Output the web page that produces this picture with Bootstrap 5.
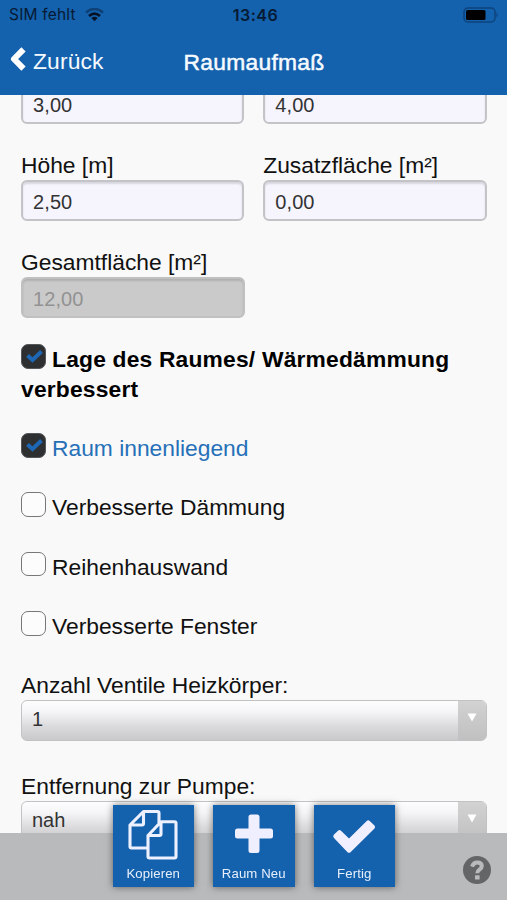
<!DOCTYPE html>
<html lang="de">
<head>
<meta charset="utf-8">
<meta name="viewport" content="width=device-width, initial-scale=1">
<title>Raumaufmaß</title>
<link href="https://cdn.jsdelivr.net/npm/bootstrap@5.3.0/dist/css/bootstrap.min.css" rel="stylesheet">
<style>
  body { font-family: "Liberation Sans", Arial, sans-serif; background: #f9f9f9; color: #111; }
  .screen { height: 900px; }
  .topbar { background: #1461ad; height: 95px; color: #f5faff; }
  .statusbar { height: 30px; color: #071a33; font-size: 16px; padding: 0 8px 0 9px; }
  .carrier { letter-spacing: .2px; font-family: Inter, sans-serif; font-size: 15.5px; }
  .clock { font-family: Inter, sans-serif; font-weight: 600; font-size: 16px; letter-spacing: .5px; padding-left: 3px; }
  .titlebar { height: 65px; font-size: 22.8px; padding: 0 9px; }
  .back { letter-spacing: .15px; padding-left: 7px; position: relative; top: -1px; }
  .page-title { letter-spacing: .3px; padding-left: 1px; -webkit-text-stroke: .5px #f5faff; }
  .chevron { margin-bottom: 7px; }
  .scroller { padding: 0 20.5px 0 21px; }
  .form-area { margin-top: -12px; }
  .field-label, .check-row { font-size: 22.8px; line-height: 30px; letter-spacing: 0; white-space: nowrap; }
  .field-gap { margin-bottom: 26px; }
  .field.form-control { height: 41px; padding: 4px 10px 0; border: 2px solid #c4c4c8; border-radius: 6px; background: #f6f5fe; color: #333; font-size: 20px; line-height: 36px; letter-spacing: .1px; box-shadow: inset 0 2px 2px rgba(0,0,0,.13); }
  .field.form-control:disabled { background: #cacaca; border-color: #c0c0c0; color: #929292; opacity: 1; -webkit-text-fill-color: #929292; }
  .cols { gap: 19px; }
  .half { width: 223.5px; }
  .check-row { margin-bottom: 29.4px; }
  .check-row.main-option { font-weight: 700; white-space: normal; color: #000; letter-spacing: .2px; font-size: 22.8px; margin-bottom: 29px; }
  .check-row.active-option { color: #2670b8; }
  .box { display: inline-block; vertical-align: top; width: 24.5px; height: 24.5px; margin-right: 6.5px; border: 1.5px solid #777; border-radius: 7px; background: #fcfcfc; }
  .box.checked { background: #2d2f31; border-color: #55585a; }
  .box svg { display: block; margin: 3px 0 0 3px; }
  .picker { height: 41px; border: 1.5px solid #c2c2c4; border-radius: 6px; background: linear-gradient(#fdfdfe 0%, #f5f5f7 28%, #dadadd 66%, #c9c9cb 100%); color: #333; font-size: 20px; padding-left: 10px; }
  .picker-value { padding-bottom: 2px; }
  .picker-arrow { width: 28px; height: 100%; padding-bottom: 5px; background: linear-gradient(#d2d2d2, #c0c0c0); }
  .picker-gap { margin-bottom: 30px; }
  .selects { margin-top: -.6px; }
  .footbar { height: 67px; background: #b8babc; }
  .tile { width: 81.5px; height: 81.5px; background: #1461ad; color: #e6effb; font-size: 13.2px; letter-spacing: .1px; line-height: 15px; border: 0; border-radius: 0; padding: 0 0 6px; box-shadow: 0 0 7px rgba(0,0,0,.5); white-space: nowrap; }
  .tiles { gap: 19px; margin-top: -28px; padding-left: 112.5px; }
  .help { width: 28px; height: 28px; margin: 22.500px 16.500px 0 0; }
</style>
</head>
<body>
<div class="screen d-flex flex-column overflow-hidden">
  <header class="topbar flex-shrink-0">
    <div class="statusbar row g-0 align-items-center">
      <div class="col d-flex align-items-center">
        <span class="carrier">SIM fehlt</span>
        <svg class="ms-2" width="21" height="14" viewBox="0 0 20 14" fill="none" stroke-width="2.6"><path d="M1.500 4.500Q10-2.500 18.500 4.500" stroke="#0d4177"/><path d="M4.500 8Q10 3.200 15.500 8" stroke="#061326"/><path d="M10 13.200 6.800 10Q10 7.400 13.200 10Z" fill="#061326" stroke="none"/></svg>
      </div>
      <div class="col-auto clock">13:46</div>
      <div class="col d-flex justify-content-end">
        <svg width="36" height="16" viewBox="0 0 36 16"><rect x="1" y="1" width="31" height="14" rx="4" fill="none" stroke="#0d437c" stroke-width="1.500"/><rect x="3" y="3" width="19.500" height="10" rx="1.500" fill="#000"/><path d="M33.500 5.300q2.400 2.700 0 5.400z" fill="#0d437c"/></svg>
      </div>
    </div>
    <div class="titlebar row g-0 align-items-center">
      <div class="col d-flex align-items-center">
        <svg class="chevron" width="17" height="24" viewBox="0 0 17 24" fill="none" stroke="#fff" stroke-width="6" stroke-linejoin="round"><path d="M14.500 2.300 5 12 14.500 21.700"/></svg>
        <span class="back">Zurück</span>
      </div>
      <div class="col-auto page-title">Raumaufmaß</div>
      <div class="col"></div>
    </div>
  </header>

  <main class="scroller flex-grow-1 overflow-hidden">
    <form class="form-area">
      <div class="cols d-flex field-gap">
        <div class="half"><input class="field form-control" value="3,00" aria-label="Länge"></div>
        <div class="half"><input class="field form-control" value="4,00" aria-label="Breite"></div>
      </div>
      <div class="cols d-flex field-gap">
        <div class="half"><label class="field-label d-block" for="hoehe">Höhe [m]</label><input id="hoehe" class="field form-control" value="2,50"></div>
        <div class="half"><label class="field-label d-block" for="zusatz">Zusatzfläche [m²]</label><input id="zusatz" class="field form-control" value="0,00"></div>
      </div>
      <div class="half field-gap"><label class="field-label d-block" for="gesamt">Gesamtfläche [m²]</label><input id="gesamt" class="field form-control" value="12,00" disabled></div>

      <div class="check-row main-option"><span class="box checked"><svg width="18" height="16" viewBox="0 0 18 16" fill="none" stroke="#1d67b5" stroke-width="4"><path d="M2.500 7.500 7.500 12 16.500 3.500"/></svg></span>Lage des Raumes/ Wärmedämmung verbessert</div>
      <div class="check-row active-option"><span class="box checked"><svg width="18" height="16" viewBox="0 0 18 16" fill="none" stroke="#1d67b5" stroke-width="4"><path d="M2.500 7.500 7.500 12 16.500 3.500"/></svg></span>Raum innenliegend</div>
      <div class="check-row"><span class="box"></span>Verbesserte Dämmung</div>
      <div class="check-row"><span class="box"></span>Reihenhauswand</div>
      <div class="check-row"><span class="box"></span>Verbesserte Fenster</div>

      <div class="selects">
        <div class="field-label">Anzahl Ventile Heizkörper:</div>
        <div class="picker picker-gap d-flex align-items-center justify-content-between overflow-hidden"><span class="picker-value">1</span>
          <span class="picker-arrow d-flex align-items-center justify-content-center"><svg width="10" height="9" viewBox="0 0 10 9"><path d="M.5.5h9L5 8.500z" fill="#fff"/></svg></span></div>
        <div class="field-label">Entfernung zur Pumpe:</div>
        <div class="picker d-flex align-items-center justify-content-between overflow-hidden"><span class="picker-value">nah</span>
          <span class="picker-arrow d-flex align-items-center justify-content-center"><svg width="10" height="9" viewBox="0 0 10 9"><path d="M.5.5h9L5 8.500z" fill="#fff"/></svg></span></div>
      </div>
    </form>
  </main>

  <footer class="footbar fixed-bottom d-flex justify-content-between align-items-start">
    <div class="tiles d-flex">
      <button class="tile d-flex flex-column align-items-center justify-content-between">
        <svg width="50" height="59" viewBox="0 0 50 59" fill="none" stroke="#edf1ff" stroke-width="3.100" stroke-linejoin="round"><path d="M20 43H3.500Q2 43 2 41.500V20L15.500 6.500H29.500Q31 6.500 31 8V18M15.500 6.500V18.500Q15.500 20 14 20H2"/><path d="M33 16.800H46.500Q48 16.800 48 18.300V51.500Q48 53 46.500 53H21.500Q20 53 20 51.500V30.500ZM33 16.800V29Q33 30.500 31.500 30.500H20"/></svg>
        <span>Kopieren</span>
      </button>
      <button class="tile d-flex flex-column align-items-center justify-content-between">
        <svg width="40" height="59" viewBox="0 0 40 59" fill="#f0efff"><path d="M17 9.500h6q2.500 0 2.500 2.500v11.500H36.500q2.500 0 2.500 2.500v5q0 2.500-2.500 2.500H25.500V45.500q0 2.500-2.500 2.500h-6q-2.500 0-2.500-2.500V33.500H3.500Q1 33.500 1 31V26q0-2.500 2.500-2.500h11V12q0-2.500 2.500-2.500z"/></svg>
        <span>Raum Neu</span>
      </button>
      <button class="tile d-flex flex-column align-items-center justify-content-between">
        <svg width="44" height="59" viewBox="0 0 44 59" fill="#f0efff"><path d="M2 29.500 6 25.700q1.500-1.300 3 0L17 33.500 34.700 16q1.500-1.500 3 0L42.500 20.500q1.300 1.500 0 3L18.500 47.200q-1.500 1.300-3 0L2 33q-1.700-1.700 0-3.500z"/></svg>
        <span>Fertig</span>
      </button>
    </div>
    <svg class="help" viewBox="0 0 28 28"><circle cx="14" cy="14" r="14" fill="#636566"/><path d="M9 10.600Q10.500 6.600 14.300 6.600 18.800 6.600 18.800 10.300C18.800 13.500 14.200 13.200 14.200 17.300" fill="none" stroke="#b8babc" stroke-width="4"/><rect x="12" y="19.300" width="4.600" height="4.200" fill="#b8babc"/></svg>
  </footer>
</div>
<script src="https://cdn.jsdelivr.net/npm/bootstrap@5.3.0/dist/js/bootstrap.bundle.min.js"></script>
</body>
</html>
